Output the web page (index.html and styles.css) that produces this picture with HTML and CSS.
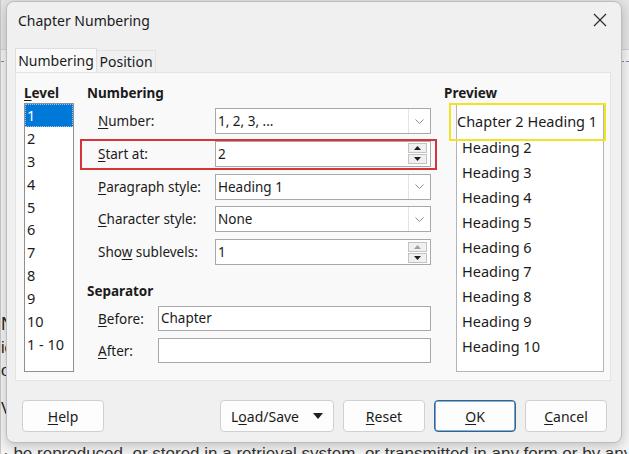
FILE: index.html
```html
<!DOCTYPE html>
<html>
<head>
<meta charset="utf-8">
<link rel="stylesheet" href="styles.css">
</head>
<body>
<div class="doc">
  <div class="ruler"></div>
  <div class="dashline"></div>
  <div class="page">
    <p class="big">Nu</p>
    <p>ic</p>
    <p>oi</p>
    <p class="para">V</p>
    <p class="last">· be reproduced, or stored in a retrieval system, or transmitted in any form or by any</p>
  </div>
</div>

<div class="dialog">
  <div class="titlebar">
    <span class="title">Chapter Numbering</span>
    <svg class="close" width="14" height="14" viewBox="0 0 14 14"><path d="M1 1L13 13M13 1L1 13" stroke="#2b2b2b" stroke-width="1.2"/></svg>
  </div>
  <div class="tabs">
    <div class="tab active">Numbering</div>
    <div class="tab">Position</div>
  </div>
  <div class="panel">
    <div class="col-level">
      <div class="head"><u>L</u>evel</div>
      <ul class="levels">
        <li class="sel">1</li><li>2</li><li>3</li><li>4</li><li>5</li><li>6</li><li>7</li><li>8</li><li>9</li><li>10</li><li>1 - 10</li>
      </ul>
    </div>
    <div class="col-num">
      <div class="head">Numbering</div>
      <div class="rows">
        <div class="row">
          <label><u>N</u>umber:</label>
          <div class="field"><span class="val">1, 2, 3, ...</span><span class="drop"><svg width="9" height="5" viewBox="0 0 9 5"><path d="M0.5 0.5L4.5 4.5L8.5 0.5" fill="none" stroke="#8a8a8a" stroke-width="1"/></svg></span></div>
        </div>
        <div class="row">
          <label><u>S</u>tart at:</label>
          <div class="field"><span class="val">2</span><span class="spin"><span class="sb"><svg width="7" height="4" viewBox="0 0 7 4"><path d="M0 4L3.5 0L7 4Z" fill="#1e1e1e"/></svg></span><span class="sb"><svg width="7" height="4" viewBox="0 0 7 4"><path d="M0 0L3.5 4L7 0Z" fill="#1e1e1e"/></svg></span></span></div>
          <span class="mark-red"></span>
        </div>
        <div class="row">
          <label><u>P</u>aragraph style:</label>
          <div class="field"><span class="val">Heading 1</span><span class="drop"><svg width="9" height="5" viewBox="0 0 9 5"><path d="M0.5 0.5L4.5 4.5L8.5 0.5" fill="none" stroke="#8a8a8a" stroke-width="1"/></svg></span></div>
        </div>
        <div class="row">
          <label><u>C</u>haracter style:</label>
          <div class="field"><span class="val">None</span><span class="drop"><svg width="9" height="5" viewBox="0 0 9 5"><path d="M0.5 0.5L4.5 4.5L8.5 0.5" fill="none" stroke="#8a8a8a" stroke-width="1"/></svg></span></div>
        </div>
        <div class="row">
          <label>Sho<u>w</u> sublevels:</label>
          <div class="field"><span class="val">1</span><span class="spin"><span class="sb"><svg width="7" height="4" viewBox="0 0 7 4"><path d="M0 4L3.5 0L7 4Z" fill="#a0a0a0"/></svg></span><span class="sb"><svg width="7" height="4" viewBox="0 0 7 4"><path d="M0 0L3.5 4L7 0Z" fill="#1e1e1e"/></svg></span></span></div>
        </div>
      </div>
      <div class="head sep">Separator</div>
      <div class="rows2">
        <div class="row2">
          <label><u>B</u>efore:</label>
          <div class="input">Chapter</div>
        </div>
        <div class="row2">
          <label><u>A</u>fter:</label>
          <div class="input"></div>
        </div>
      </div>
    </div>
    <div class="col-prev">
      <div class="head">Preview</div>
      <div class="pbox">
        <div class="pitem first">Chapter 2 Heading 1</div>
        <div class="pitem">Heading 2</div>
        <div class="pitem">Heading 3</div>
        <div class="pitem">Heading 4</div>
        <div class="pitem">Heading 5</div>
        <div class="pitem">Heading 6</div>
        <div class="pitem">Heading 7</div>
        <div class="pitem">Heading 8</div>
        <div class="pitem">Heading 9</div>
        <div class="pitem">Heading 10</div>
        <span class="mark-yellow"></span>
      </div>
    </div>
  </div>
  <div class="buttons">
    <div class="btn help"><span><u>H</u>elp</span></div>
    <div class="spacer"></div>
    <div class="btn wide">L<u>o</u>ad/Save <svg class="tri" width="10" height="6" viewBox="0 0 10 6"><path d="M0 0L5 6L10 0Z" fill="#1e1e1e"/></svg></div>
    <div class="btn"><span><u>R</u>eset</span></div>
    <div class="btn ok"><span><u>O</u>K</span></div>
    <div class="btn"><span><u>C</u>ancel</span></div>
  </div>
</div>
</body>
</html>
```

FILE: styles.css
```css
* { box-sizing: border-box; margin: 0; padding: 0; }
html, body { width: 629px; height: 454px; overflow: hidden; }
body {
  position: relative;
  background: #f4f4f4;
  font-family: "Noto Sans", "DejaVu Sans", sans-serif;
  font-size: 13.5px;
  color: #1b1b1b;
}
u { text-decoration: underline; text-underline-offset: 2px; text-decoration-thickness: 1px; }

/* background document */
.doc { height: 454px; display: flex; flex-direction: column; border-left: 1px solid #c8c8c8; overflow: hidden; }
.doc > * { flex-shrink: 0; }
.ruler { height: 50px; background: #e4e4e4; border-bottom: 1px solid #d0d0d0; }
.dashline { margin-top: 11px; border-top: 1px dashed #7d84b8; }
.page { padding-top: 250px; font-family: "Liberation Sans", Arial, sans-serif; font-size: 16px; color: #222; }
.page p { height: 23px; line-height: 23px; white-space: nowrap; }
.page p.big { font-size: 18px; height: 24px; line-height: 24px; }
.page p.para { margin-top: 15px; }
.page p.last { margin-top: 22px; padding-left: 2px; font-size: 17px; color: #333; }

/* dialog */
.dialog {
  position: absolute; left: 6px; top: 1px; width: 616px; height: 442px;
  background: #f0f0f0; border: 1px solid #bdbdbd; border-radius: 8px;
  box-shadow: 0 3px 12px rgba(0,0,0,0.22);
  display: flex; flex-direction: column;
}
.titlebar {
  height: 36px; display: flex; align-items: center; justify-content: space-between;
  padding: 0 14px 0 11px; font-size: 14px; color: #1a1a1a;
}
.tabs { display: flex; align-items: flex-end; height: 24px; margin: 10px 0 0 8px; }
.tab {
  height: 22px; padding: 0 4px; display: flex; align-items: center; justify-content: center;
  background: #f0f0f0; border: 1px solid #e2e2e2; border-bottom: none; font-size: 14px;
}
.tab.active { height: 24px; width: 82px; background: #f9f9f9; border-color: #dedede; }
.tab + .tab { width: 59px; border-left: none; }

.panel {
  margin-left: 8px; width: 596px; height: 309px; flex-shrink: 0;
  background: #f9f9f9; border: 1px solid #e3e3e3;
  display: flex; padding: 11px 0 0 8px;
}
.head { height: 19px; line-height: 19px; font-weight: bold; font-size: 13.5px; }

.col-level { width: 50px; }
.levels {
  list-style: none; width: 50px; height: 269px; background: #fff;
  border: 1px solid #8f8f8f; font-size: 14.5px;
}
.levels li { height: 22.9px; line-height: 22.9px; padding-left: 2px; }
.levels li.sel { background: #0078d7; color: #fff; outline: 1px dotted #9cc6ee; outline-offset: -1px; }

.col-num { margin-left: 13px; width: 344px; }
.rows { margin-top: 5px; display: flex; flex-direction: column; gap: 6.75px; }
.row { position: relative; display: flex; align-items: center; height: 26px; padding-left: 11px; }
.row label { width: 117px; }
.field {
  width: 216px; height: 26px; background: #fff; border: 1px solid #a8a8a8;
  display: flex; align-items: center;
}
.val { flex: 1; padding-left: 2px; white-space: nowrap; }
.drop {
  width: 22px; height: 24px; border-left: 1px solid #e3e3e3;
  display: flex; align-items: center; justify-content: center;
}
.spin { width: 22px; height: 24px; display: flex; flex-direction: column; justify-content: center; padding-right: 2px; }
.sb {
  width: 19px; height: 10px; border: 1px solid #c3c3c3; background: #f0f0f0;
  display: flex; align-items: center; justify-content: center;
}
.sb + .sb { margin-top: 1px; }
.mark-red {
  position: absolute; left: -7px; right: -6px; top: -2px; bottom: -3px;
  border: 2.5px solid #d5343c; pointer-events: none;
}

.head.sep { margin-top: 17px; height: 18px; line-height: 18px; }
.rows2 { margin-top: 6px; display: flex; flex-direction: column; gap: 7px; }
.row2 { display: flex; align-items: center; height: 25px; padding-left: 11px; }
.row2 label { width: 60px; }
.input {
  width: 273px; height: 25px; background: #fff; border: 1px solid #a8a8a8;
  padding-left: 2px; line-height: 23px;
}

.col-prev { margin-left: 13px; width: 161px; }
.pbox {
  position: relative; margin: 1px 0 0 12px; width: 148px; height: 268px;
  background: #fff; border: 1px solid #b4b4b4; padding-top: 3px; font-size: 14.5px;
}
.pitem { height: 24.9px; line-height: 24.9px; padding-left: 5px; white-space: nowrap; }
.pitem.first { height: 27px; line-height: 27px; padding-left: 0; }
.mark-yellow {
  position: absolute; left: -8px; top: -2px; width: 157px; height: 38px;
  border: 2.5px solid #f2e424; pointer-events: none;
}

.buttons { display: flex; margin-top: 19px; padding: 0 14px 0 15px; gap: 9px; }
.spacer { flex: 1; }
.btn {
  width: 82px; height: 32px; background: #fdfdfd; border: 1px solid #d0d0d0; border-radius: 4px;
  display: flex; align-items: center; justify-content: center; font-size: 14px;
}
.btn.wide { width: 114px; }
.btn .tri { margin-left: 14px; }
.btn.ok { border-color: #2a669c; box-shadow: inset 0 0 0 0.6px #2a669c; }
```
